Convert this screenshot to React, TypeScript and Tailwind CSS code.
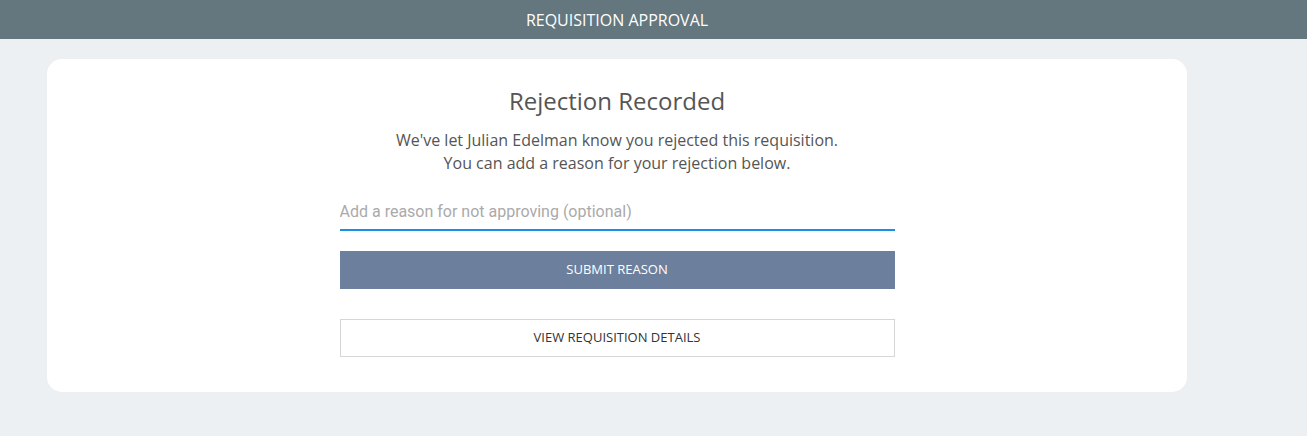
export default function App() {
  return (
    <div className="min-h-[436px] bg-[#ecf0f3] font-['Open_Sans',sans-serif]">
      <header className="h-[39px] bg-[#64767e] pl-[47px]">
        <div className="w-[1140px] h-full flex items-center justify-center">
          <h1 className="text-white text-[16px]">REQUISITION APPROVAL</h1>
        </div>
      </header>

      <div className="pt-[20px] pl-[47px]">
        <div className="w-[1140px] h-[333px] bg-white rounded-[15px] flex flex-col items-center pt-[26px]">
          <h2 className="text-[#555] text-[24px] leading-[32px]">Rejection Recorded</h2>
          <p className="mt-[12px] text-[#555] text-[16px] leading-[23px] text-center">
            We've let Julian Edelman know you rejected this requisition.
            <br />
            You can add a reason for your rejection below.
          </p>

          <div className="w-[555px] mt-[21px]">
            <input
              type="text"
              placeholder="Add a reason for not approving (optional)"
              className="w-full h-[35px] border-b-2 border-[#1a8fe3] outline-none text-[16px] text-[#333] placeholder:text-[#aaa] font-['Roboto',sans-serif] pb-[2px]"
            />
            <button className="mt-[20px] w-full h-[38px] bg-[#6c7f9c] text-white text-[13px]">
              SUBMIT REASON
            </button>
            <button className="mt-[30px] w-full h-[38px] bg-white border border-[#d6d6d6] text-[#333] text-[13px]">
              VIEW REQUISITION DETAILS
            </button>
          </div>
        </div>
      </div>
    </div>
  );
}
